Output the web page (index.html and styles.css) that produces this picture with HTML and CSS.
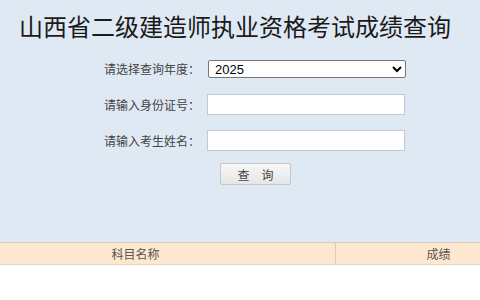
FILE: index.html
```html
<!DOCTYPE html>
<html lang="zh-CN">
<head>
    <meta charset="UTF-8">
    <title>山西省二级建造师执业资格考试成绩查询</title>
    <link rel="stylesheet" href="styles.css">
</head>
<body>
    <div class="query-panel">
        <h1 class="page-title">山西省二级建造师执业资格考试成绩查询</h1>

        <form class="query-form" onsubmit="return false;">
            <label class="field-label" for="year">请选择查询年度：</label>
            <select id="year" class="field-select">
                <option value="2025">2025</option>
                <option value="2024">2024</option>
                <option value="2023">2023</option>
            </select>

            <label class="field-label" for="idcard">请输入身份证号：</label>
            <input id="idcard" class="field-input" type="text">

            <label class="field-label" for="name">请输入考生姓名：</label>
            <input id="name" class="field-input" type="text">

            <button class="query-btn" type="submit">查　询</button>
        </form>
    </div>

    <div class="result-table">
        <div class="result-head">
            <div class="col-subject">科目名称</div>
            <div class="col-score">成绩</div>
        </div>
    </div>
</body>
</html>
```

FILE: styles.css
```css
body {
    margin: 0;
    width: 480px;
    font-family: "Noto Sans CJK SC", sans-serif;
    background-color: #fff;
}
.query-panel {
    background-color: #dfe9f3;
    height: 242px;
    overflow: hidden;
}
.page-title {
    margin: 0;
    padding: 11px 10px 0 0;
    height: 40px;
    box-sizing: border-box;
    font-weight: normal;
    font-size: 24px;
    line-height: 30px;
    color: #1a1a1a;
    text-align: center;
    white-space: nowrap;
}
.query-form {
    display: grid;
    grid-template-columns: 200px 198px;
    grid-template-rows: 35px 36px 36px auto;
    column-gap: 7px;
    align-items: center;
    margin-top: 11px;
}
.field-label {
    justify-self: end;
    font-size: 12px;
    color: #444;
}
.field-select {
    width: 198px;
    height: 18px;
    margin-left: 1px;
    font-family: "Liberation Sans", Arial, sans-serif;
    font-size: 13px;
    color: #000;
    background-color: #fff;
    border: 1px solid #767676;
    border-radius: 2px;
    padding: 0 2px;
}
.field-input {
    width: 198px;
    height: 21px;
    box-sizing: border-box;
    border: 1px solid #c4c9cf;
    background-color: #fff;
    padding: 0 4px;
}
.query-btn {
    grid-column: 2;
    justify-self: start;
    margin: 5px 0 0 13px;
    width: 71px;
    height: 22px;
    font-family: "Noto Sans CJK SC", sans-serif;
    font-size: 12px;
    color: #444;
    background: linear-gradient(#f7f7f7, #e6e6e6);
    border: 1px solid #c6c6c6;
    border-radius: 2px;
    padding: 0;
}
.result-head {
    display: flex;
    height: 23px;
    box-sizing: border-box;
    background-color: #fde8cf;
    border-top: 1px solid #d6cdbf;
    border-bottom: 1px solid #e2d6c4;
    font-size: 12px;
    line-height: 21px;
    color: #555;
}
.col-subject {
    width: 336px;
    padding-right: 64px;
    box-sizing: border-box;
    text-align: center;
    border-right: 1px solid #d9cbb6;
}
.col-score {
    flex: 1;
    padding-left: 61px;
    text-align: center;
}
```
